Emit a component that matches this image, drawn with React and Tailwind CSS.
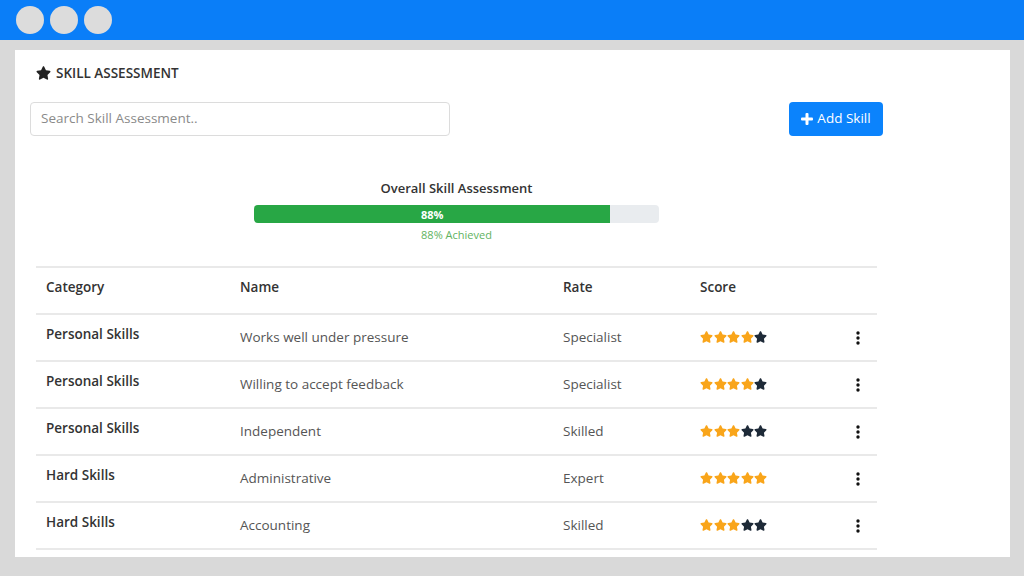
import React from "react";

const StarSvg = ({ color }) => (
  <svg viewBox="0 0 576 512" width="13" height="12" fill={color} className="block">
    <path d="M259.3 17.8L194 150.2 47.9 171.5c-26.2 3.8-36.7 36.1-17.7 54.6l105.7 103-25 145.5c-4.5 26.3 23.2 46 46.4 33.7L288 439.6l130.7 68.7c23.2 12.2 50.9-7.4 46.4-33.7l-25-145.5 105.7-103c19-18.5 8.5-50.8-17.7-54.6L382 150.2 316.7 17.8c-11.7-23.6-45.6-23.9-57.4 0z" />
  </svg>
);

const Stars = ({ n }) => (
  <div className="flex items-center gap-[0.5px]">
    {[0, 1, 2, 3, 4].map((i) => (
      <StarSvg key={i} color={i < n ? "#f9a51a" : "#1e2a38"} />
    ))}
  </div>
);

const Dots = () => (
  <svg viewBox="0 0 4 14" width="4" height="14" fill="#111" className="block">
    <circle cx="2" cy="2" r="1.7" />
    <circle cx="2" cy="7" r="1.7" />
    <circle cx="2" cy="12" r="1.7" />
  </svg>
);

const rows = [
  ["Personal Skills", "Works well under pressure", "Specialist", 4],
  ["Personal Skills", "Willing to accept feedback", "Specialist", 4],
  ["Personal Skills", "Independent", "Skilled", 3],
  ["Hard Skills", "Administrative", "Expert", 5],
  ["Hard Skills", "Accounting", "Skilled", 3],
];

export default function App() {
  return (
    <div
      className="w-[1024px] h-[576px] bg-[#d9d9d9] overflow-hidden flex flex-col"
      style={{ fontFamily: '"Open Sans", "Noto Sans", sans-serif' }}
    >
      <div className="h-[40px] bg-[#0a7ef8] flex items-center gap-[6px] pl-[16px] shrink-0">
        <div className="w-[28px] h-[28px] rounded-full bg-[#dcdcdc]" />
        <div className="w-[28px] h-[28px] rounded-full bg-[#dcdcdc]" />
        <div className="w-[28px] h-[28px] rounded-full bg-[#dcdcdc]" />
      </div>
      <div className="mt-[10px] ml-[15px] w-[995px] h-[507px] bg-white px-[15px] pt-[15px]">
        <div className="flex items-center gap-[5px] pl-[6px] h-[16px]">
          <svg viewBox="0 0 576 512" width="15" height="14" fill="#222" className="block">
            <path d="M259.3 17.8L194 150.2 47.9 171.5c-26.2 3.8-36.7 36.1-17.7 54.6l105.7 103-25 145.5c-4.5 26.3 23.2 46 46.4 33.7L288 439.6l130.7 68.7c23.2 12.2 50.9-7.4 46.4-33.7l-25-145.5 105.7-103c19-18.5 8.5-50.8-17.7-54.6L382 150.2 316.7 17.8c-11.7-23.6-45.6-23.9-57.4 0z" />
          </svg>
          <span className="text-[13.5px] font-semibold text-[#333] leading-[16px]">SKILL ASSESSMENT</span>
        </div>
        <div className="w-[853px] mt-[21px]">
          <div className="flex justify-between">
            <div className="w-[420px] h-[34px] border border-[#dcdcdc] rounded-[4px] flex items-center px-[10px]">
              <span className="text-[13.5px] text-[#8a8a8a] leading-none">Search Skill Assessment..</span>
            </div>
            <div className="w-[94px] h-[34px] bg-[#0b83fc] rounded-[4px] flex items-center justify-center gap-[4px] text-white">
              <svg viewBox="0 0 12 12" width="12" height="12" fill="white" className="block">
                <rect x="4.5" y="0" width="3" height="12" rx="1" />
                <rect x="0" y="4.5" width="12" height="3" rx="1" />
              </svg>
              <span className="text-[13.5px] leading-none">Add Skill</span>
            </div>
          </div>
          <div className="flex flex-col items-center mt-[43px]">
            <div className="text-[13px] font-semibold text-[#333] leading-[18px]">Overall Skill Assessment</div>
            <div className="mt-[8px] w-[405px] h-[18px] bg-[#e9ecef] rounded-[4px] overflow-hidden flex">
              <div className="w-[88%] h-full bg-[#28a745] flex items-center justify-center">
                <span className="text-[11px] font-bold text-white leading-none">88%</span>
              </div>
            </div>
            <div className="mt-[4px] text-[11px] text-[#5fb35f] leading-[16px]">88% Achieved</div>
          </div>
          <div className="mx-[6px] mt-[23px] w-[841px]">
            <div className="grid grid-cols-[194px_323px_137px_1fr_50px] h-[47px] items-center border-t-2 border-[#e9e9e9]">
              <div className="pl-[10px] pb-[6px] text-[13.5px] font-semibold text-[#333]">Category</div>
              <div className="pl-[10px] pb-[6px] text-[13.5px] font-semibold text-[#333]">Name</div>
              <div className="pl-[10px] pb-[6px] text-[13.5px] font-semibold text-[#333]">Rate</div>
              <div className="pl-[10px] pb-[6px] text-[13.5px] font-semibold text-[#333]">Score</div>
              <div />
            </div>
            {rows.map((r, i) => (
              <div
                key={i}
                className="grid grid-cols-[194px_323px_137px_1fr_50px] h-[47px] items-center border-t-2 border-[#e9e9e9]"
              >
                <div className="pl-[10px] pb-[6px] text-[13.5px] font-semibold text-[#333]">{r[0]}</div>
                <div className="pl-[10px] pb-[1px] text-[13.5px] text-[#555]">{r[1]}</div>
                <div className="pl-[10px] pb-[1px] text-[13.5px] text-[#555]">{r[2]}</div>
                <div className="pl-[10px] pb-[1px]">
                  <Stars n={r[3]} />
                </div>
                <div className="pl-[29px]">
                  <Dots />
                </div>
              </div>
            ))}
            <div className="border-t-2 border-[#e9e9e9]" />
          </div>
        </div>
      </div>
    </div>
  );
}
